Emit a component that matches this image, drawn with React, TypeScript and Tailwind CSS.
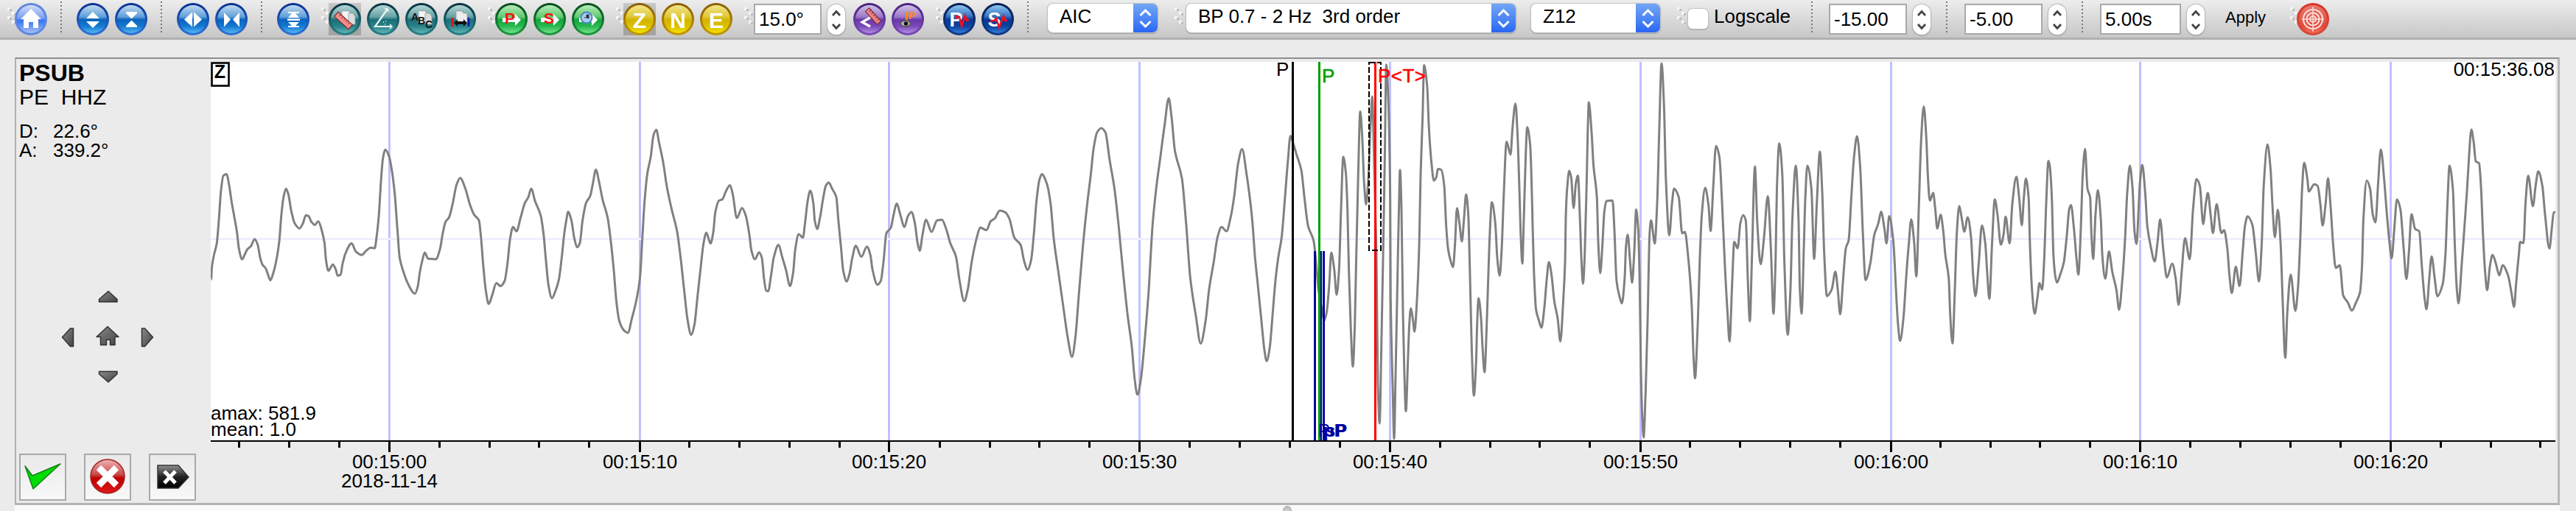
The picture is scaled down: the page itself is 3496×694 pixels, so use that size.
import type { ReactNode } from 'react';
import clsx from 'clsx';

type Tone =
  | 'home'
  | 'blue'
  | 'teal'
  | 'green'
  | 'yellow'
  | 'purple'
  | 'navy'
  | 'red';

const rims: Record<Tone, string> = {
  home: 'bg-linear-to-b from-[#5f86dc] to-[#5c86e8]',
  blue: 'bg-linear-to-b from-[#0a2f90] to-[#2f74d6]',
  teal: 'bg-linear-to-b from-[#06303f] to-[#2a8488]',
  green: 'bg-linear-to-b from-[#06481c] to-[#1c9a40]',
  yellow: 'bg-linear-to-b from-[#8a5a06] to-[#c49a00]',
  purple: 'bg-linear-to-b from-[#47207e] to-[#7c4cb8]',
  navy: 'bg-linear-to-b from-[#071a4c] to-[#123c8c]',
  red: 'bg-linear-to-b from-[#d83428] to-[#d84838]',
};

const fills: Record<Tone, string> = {
  home: 'bg-[linear-gradient(#d3def8,#7da2f2_45%,#3473f3_55%,#a9c0f2)]',
  blue: 'bg-[linear-gradient(#c2d9ef,#5f9fd9_42%,#0a63bd_52%,#1379d2_75%,#58b4f2)]',
  teal: 'bg-[linear-gradient(#b4d4d4,#65a3a5_42%,#1a6f78_52%,#27828a_75%,#62b4b4)]',
  green: 'bg-[linear-gradient(#b6eab8,#62ca70_42%,#12a63e_52%,#28b850_75%,#74e28a)]',
  yellow: 'bg-[linear-gradient(#f0e488,#dfc836_42%,#d2b400_52%,#dcc000_75%,#f2e000)]',
  purple: 'bg-[linear-gradient(#cfc0e4,#9c78c8_42%,#6a38a8_52%,#7a48b8_75%,#b08ce0)]',
  navy: 'bg-[linear-gradient(#8cc4ee,#3a7ac6_38%,#0a3894_52%,#0d429e_75%,#2f7ed6)]',
  red: 'bg-[linear-gradient(#e8786c,#e25a4c_50%,#df4a3a_75%,#ee7058)]',
};

function Ball({
  tone,
  className,
  active,
  children,
}: {
  tone: Tone;
  className?: string;
  active?: boolean;
  children: ReactNode;
}) {
  return (
    <button
      type="button"
      className={clsx(
        'grid size-11 shrink-0',
        active && 'bg-linear-to-b from-[#c9c9c9] via-[#aaaaaa] to-[#a2a2a2]',
        className,
      )}
    >
      <span className={clsx('[grid-area:1/1] grid rounded-full p-[3px]', rims[tone])}>
        <span className={clsx('rounded-full', fills[tone])} />
      </span>
      <svg viewBox="0 0 44 44" className="[grid-area:1/1] size-full" fill="white">
        {children}
      </svg>
    </button>
  );
}

function Grip({ className }: { className?: string }) {
  return (
    <svg viewBox="0 0 12 24" className={clsx('h-6 w-3 shrink-0', className)}>
      {[0, 12].map((y) => (
        <g key={y}>
          <rect x="0" y={y} width="4" height="4" fill="#f6f6f6" />
          <rect x="3" y={y + 2} width="3" height="3" fill="#bdbdbd" />
          <rect x="6" y={y + 6} width="4" height="4" fill="#f6f6f6" />
          <rect x="9" y={y + 8} width="3" height="3" fill="#bdbdbd" />
        </g>
      ))}
    </svg>
  );
}

function Separator({ className }: { className?: string }) {
  return (
    <span
      className={clsx(
        'h-[44px] w-[2px] shrink-0 bg-[repeating-linear-gradient(#777_0_2px,transparent_2px_5px)]',
        className,
      )}
    />
  );
}

function Spin({
  value,
  className,
}: {
  value: string;
  className?: string;
}) {
  return (
    <>
      <span
        className={clsx(
          'mt-px flex h-[42px] shrink-0 items-center border-2 border-[#a9a9a9] bg-white pl-[5px] text-[26px] leading-none',
          className,
        )}
      >
        {value}
      </span>
      <span className="mt-[2px] ml-2 grid h-[41px] w-6 shrink-0 place-items-center rounded-full bg-white shadow-[0_0_1px_1px_#bdbdbd,0_1px_1px_1px_#a5a5a5]">
        <svg viewBox="0 0 24 42" className="h-[42px] w-6" fill="none" stroke="#444" strokeWidth="2.8">
          <path d="M7 15l5-5.500l5 5.500M7 27l5 5.500l5-5.500" />
        </svg>
      </span>
    </>
  );
}

function Combo({ value, className }: { value: string; className?: string }) {
  return (
    <span
      className={clsx(
        'flex h-[39px] shrink-0 overflow-hidden rounded-[7px] bg-white text-[26px] leading-[34px] shadow-[0_0_1px_1px_#c4c4c4,0_1px_1px_1px_#a0a0a0]',
        className,
      )}
    >
      <span className="grow pl-4 whitespace-pre">{value}</span>
      <span className="grid w-[33px] place-items-center bg-linear-to-b from-[#74a6f6] to-[#2a66f2]">
        <svg viewBox="0 0 33 39" className="h-[39px] w-[33px]" fill="none" stroke="white" strokeWidth="3">
          <path d="M9.500 16l7-7l7 7M9.500 24l7 7l7-7" />
        </svg>
      </span>
    </span>
  );
}

function Pages() {
  return (
    <>
      <path d="M18 11h9l3 4v12h-12z" fill="#f4f4f4" stroke="#aaa" strokeWidth=".8" />
      <path d="M27 14h6l3 4v11h-9z" fill="#dcdcdc" stroke="#999" strokeWidth=".8" />
    </>
  );
}

function Toolbar() {
  return (
    <div className="flex h-[54px] items-start border-b-[3px] border-[#b0b0b0] bg-linear-to-b from-[#ededed] to-[#c7c7c7] pt-1 pl-[10px]">
      <Grip className="mt-[6px]" />
      <Ball tone="home" className="-ml-[2px]">
        <path d="M22 8L8 22h4v12h7v-8h6v8h7V22h4z" />
      </Ball>
      <Separator className="-mt-[2px] ml-[18px]" />
      <Ball tone="blue" className="ml-5">
        <path d="M22 12l9 9H13zM22 34l9-9H13z" />
      </Ball>
      <Ball tone="blue" className="ml-2">
        <path d="M15 12h15v2l-7 7h-1l-7-7zM15 33h15v-2l-7-7h-1l-7 7z" />
      </Ball>
      <Separator className="-mt-[2px] ml-[18px]" />
      <Ball tone="blue" className="ml-5">
        <path d="M10 22.500l11-10v20zM34 22.500l-11-10v20z" />
      </Ball>
      <Ball tone="blue" className="ml-2">
        <path d="M12 13l9 9.500l-9 10zM33 13l-9 9.500l9 10z" />
      </Ball>
      <Separator className="-mt-[2px] ml-[18px]" />
      <Ball tone="blue" className="ml-5">
        <path d="M15 12h15v2h-5l5 6H15l5-6h-5zM14 21.500h17v2.500H14zM15 33h15v-2h-5l5-5H15l5 5h-5z" />
      </Ball>
      <Grip className="mt-[6px] ml-4" />

      <Ball tone="teal" active className="-ml-[2px]">
        <Pages />
        <g transform="rotate(42 20 24)">
          <rect x="7" y="20" width="26" height="8" fill="#f28c8c" stroke="#7a2020" />
          <path d="M12 20v3M16 20v3M20 20v3M24 20v3M28 20v3" stroke="#8c2626" />
        </g>
      </Ball>
      <Ball tone="teal" className="ml-2">
        <g fill="none" stroke="#eef8f8" strokeWidth="2.2">
          <path d="M28 8L11 32h22" />
          <path d="M24 8l4 0l1 4M31 29l3 3l-3 3" strokeWidth="1.500" />
          <path d="M22 26h1M25 25h1M24 29h1" strokeWidth="1.500" />
        </g>
      </Ball>
      <Ball tone="teal" className="ml-2">
        <Pages />
        <g fill="#111" className="text-[14px] font-bold">
          <text x="8" y="24">A</text>
          <text x="17" y="29">B</text>
          <text x="27" y="34">C</text>
        </g>
      </Ball>
      <Ball tone="teal" className="ml-2">
        <path d="M17 11h8l2 3h5v13H17z" fill="#ececec" stroke="#999" strokeWidth=".8" />
        <path d="M12 20v12" stroke="#e01010" strokeWidth="2.500" />
        <path d="M34 20v12" stroke="#1010b0" strokeWidth="2.500" />
        <path d="M14 27l5-5v3h8v-3l5 5l-5 5v-3h-8v3z" fill="#111" />
      </Ball>

      <Grip className="mt-[6px] ml-4" />
      <Ball tone="green" className="-ml-[2px]">
        <path d="M10 20h17v-5l8 8l-8 8v-5H10z" />
        <text x="13" y="28" fill="#f81010" className="text-[21px] font-bold">P</text>
      </Ball>
      <Ball tone="green" className="ml-2">
        <path d="M10 20h17v-5l8 8l-8 8v-5H10z" />
        <text x="14" y="28" fill="#f81010" className="text-[21px] font-bold">S</text>
      </Ball>
      <Ball tone="green" className="ml-2">
        <path d="M10 20h17v-5l8 8l-8 8v-5H10z" />
        <circle cx="20" cy="20" r="7.500" fill="#a9cdf0" stroke="#4a86c4" strokeWidth="2" />
        <path d="M20 20h-3M20 20v-4h3v5z" stroke="#333" fill="#333" />
      </Ball>

      <Grip className="mt-[6px] ml-4" />
      <Ball tone="yellow" active className="-ml-[2px]">
        <text x="22" y="33.500" textAnchor="middle" className="text-[30px] font-bold">Z</text>
      </Ball>
      <Ball tone="yellow" className="ml-2">
        <text x="22" y="33.500" textAnchor="middle" className="text-[30px] font-bold">N</text>
      </Ball>
      <Ball tone="yellow" className="ml-2">
        <text x="22" y="33.500" textAnchor="middle" className="text-[30px] font-bold">E</text>
      </Ball>

      <Grip className="mt-[6px] ml-4" />
      <Spin value="15.0°" className="ml-[1px] w-[92px]" />
      <Ball tone="purple" className="ml-[11px]">
        <path d="M23 20L12 26l11 6" fill="none" stroke="white" strokeWidth="3.200" />
        <g transform="rotate(48 27 18)">
          <rect x="15" y="14.500" width="24" height="7" fill="#ee8080" stroke="#702838" />
          <path d="M19 14.500v3M23 14.500v3M27 14.500v3M31 14.500v3M35 14.500v3" stroke="#702838" />
        </g>
      </Ball>
      <Ball tone="purple" className="ml-2">
        <text x="18.500" y="22" fill="#ff8a10" className="text-[15px] font-bold">IP</text>
        <path d="M20.500 12v15" stroke="#ff8a10" strokeWidth="2.500" />
        <ellipse cx="19" cy="28" rx="6.500" ry="4" fill="#b9b9b9" stroke="#555" strokeWidth="1.500" />
        <circle cx="19.500" cy="28" r="2.800" fill="#111" />
      </Ball>

      <Grip className="mt-[6px] ml-4" />
      <Ball tone="navy" className="-ml-[2px]">
        <text x="8.500" y="31.500" className="text-[27px] font-bold">P</text>
        <path d="M17 22l1-4l4 1l3 13l5-15l2 7l3-1" fill="none" stroke="#f01020" strokeWidth="2.500" />
      </Ball>
      <Ball tone="navy" className="ml-2">
        <text x="8.500" y="31.500" className="text-[27px] font-bold">S</text>
        <path d="M12 25l5-1l3-3l4 12l6-15l2 6l3-1" fill="none" stroke="#f01020" strokeWidth="2.500" />
      </Ball>

      <Separator className="-mt-[2px] ml-[18px]" />
      <Combo value="AIC" className="mt-[1px] ml-[26px] w-[149px]" />
      <Grip className="mt-[6px] ml-[23px]" />
      <Combo value="BP 0.7 - 2 Hz  3rd order" className="mt-[1px] ml-[4px] w-[447px]" />
      <Combo value="Z12" className="mt-[1px] ml-[21px] w-[175px]" />
      <Grip className="mt-[6px] ml-[23px]" />
      <span className="mt-2 ml-[3px] size-[27px] shrink-0 rounded-[6px] bg-white shadow-[0_0_1px_1px_#c4c4c4,0_1px_1px_1px_#a8a8a8]" />
      <span className="ml-[8px] w-[105px] text-[26px] leading-[37px]">Logscale</span>
      <Separator className="-mt-[2px] ml-[27px]" />
      <Spin value="-15.00" className="ml-[22px] w-[106px]" />
      <Separator className="-mt-[2px] ml-[21px]" />
      <Spin value="-5.00" className="ml-[23px] w-[106px]" />
      <Separator className="-mt-[2px] ml-[21px]" />
      <Spin value="5.00s" className="ml-[23px] w-[110px]" />
      <span className="ml-[28px] w-[56px] text-[22px] leading-[40px]">Apply</span>
      <Grip className="mt-[6px] ml-[32px]" />
      <Ball tone="red" className="-ml-[3px]">
        <g fill="none" stroke="#fbdcd8" strokeWidth="2.200">
          <circle cx="22" cy="22" r="13" />
          <circle cx="22" cy="22" r="8.500" />
          <circle cx="22" cy="22" r="4" />
          <path d="M22 5v34M7 22h30" strokeWidth="1.500" />
        </g>
      </Ball>
    </div>
  );
}

// Digitised trace. Every record has its own start pixel and horizontal
// resolution, the vertical resolution is shared.
const Y_RES = 2.554;

const records = [
  {
    start: 280,
    res: 2.119,
    samples:
      '14,765 16,722 22,680 30,640 36,560 42,460 49,405 58,400 66,440 72,490 80,545 88,600 94,660 103,695 110,680 118,660 128,650 139,625 148,645 155,690 162,715 170,725 178,750 184,768 192,745 202,695 210,630 216,540 222,480 229,450 236,470 244,525 254,570 268,588 278,570 286,543 294,545 302,565 312,576 322,563 332,595 340,640 344,695 351,735 364,713 372,730 378,752 386,748 392,710 400,675 418,640 430,668 447,680 460,665 472,655 484,657 490,615 496,545 502,430 508,345 515,315 526,340 534,390 542,470 550,600 556,690 566,735 578,775 600,814 608,790 614,740 622,695 628,672 638,693 660,695 672,660 680,605 688,565 698,550 708,505 720,435 730,413 745,450 758,505 770,540 784,560 790,620 796,710 804,805 812,850 822,820 834,778 846,788 858,770 866,710 874,620 882,583 892,598 904,550 916,500 926,480 934,450 946,495 962,545 970,610 976,690 984,785 994,830 1004,805 1014,765 1022,690 1030,600 1036,555 1040,530 1050,560 1058,620 1066,653 1074,640 1082,560 1092,500 1104,475 1112,430 1120,384 1130,430 1140,490 1154,550 1164,640 1172,735 1180,850 1188,910 1200,940 1212,950 1224,900 1238,830 1247,760 1254,620 1260,500 1268,400 1278,340 1286,265 1294,246 1302,290 1314,360 1324,440 1338,520 1354,600 1364,690 1374,800 1384,905 1394,957 1404,920 1412,830 1422,720 1430,640 1438,603 1450,640 1458,600 1464,530 1474,492 1484,487 1494,460 1506,438 1514,470',
  },
  {
    start: 1000,
    res: 2.119,
    samples:
      '0,552 15,517 26,545 36,610 42,665 52,695 64,671 72,690 78,760 84,803 90,806 98,755 106,690 120,645 130,685 142,735 153,788 162,740 168,660 178,608 190,620 196,570 204,490 211,457 220,500 224,560 231,590 240,545 248,485 256,440 264,429 274,450 286,480 292,560 300,660 306,735 316,772 324,745 332,690 342,648 358,686 374,651 384,680 390,730 404,783 414,770 422,700 430,605 443,585 450,545 460,502 470,540 482,583 492,545 502,531 512,570 520,640 526,665 534,610 544,558 560,600 576,560 590,558 602,590 614,640 630,685 640,765 654,840 664,800 676,700 690,620 700,585 718,594 730,563 742,553 756,526 772,532 784,555 798,620 816,645 826,700 836,732 846,700 854,610 862,490 870,420 877,400 892,435 902,500 912,630 926,750 940,870 952,970 964,1033 974,960 984,810 996,640 1006,520 1018,400 1026,310 1036,255 1048,240 1060,255 1072,350 1086,450 1098,580 1110,730 1124,890 1136,1000 1144,1110 1152,1165 1162,1110 1172,990 1184,810 1196,570 1206,450 1218,340 1230,230 1242,137 1250,200 1260,320 1280,415 1292,570 1304,760 1320,890 1334,987 1348,910 1358,800 1372,700 1382,620 1394,583 1408,598 1420,550 1430,480 1442,360 1453,313 1466,400 1478,510',
  },
  {
    start: 1700,
    res: 3,
    samples:
      '0,575 10,690 22,790 36,910 48,1010 57,1048 70,1000 80,900 94,760 104,690 118,620 130,500 144,350 154,267 166,295 180,335 198,385 212,490 226,580 248,630 258,700 268,800 282,870 292,908 302,875 312,780 320,672 332,730 342,818 352,730 360,520 369,340 380,400 386,520 392,740 400,940 408,1067 416,920 422,680 430,400 438,182 446,270 454,430 462,505 472,400 480,230 487,130 495,370 504,680 510,1130 517,1265 524,1000 532,650 538,350 544,20 552,130 560,480 562,830 570,1130 576,1318 582,1100 590,750 596,500 600,385 606,520 612,880 618,1100 624,1222 632,1050 638,920 644,865 652,900 659,946 668,850 678,650 684,400 692,200 698,22 710,90 718,240 728,360 738,422 748,410 754,382 768,385 780,440 788,580 796,660 806,700 816,722 824,640 832,518 842,570 852,633 860,560 869,470 878,540 884,720 892,1000 901,1168 910,1050 914,920 920,830 930,900 936,1000 944,1087 954,900 964,640 974,497 988,570 996,690 1006,752 1014,660 1022,480 1034,287 1050,332 1058,240 1070,155 1078,250 1086,450 1092,620 1098,710 1104,560 1112,330 1118,237 1130,300 1138,500',
  },
  {
    start: 2080,
    res: 2.178,
    samples:
      '0,580 4,740 10,870 18,905 26,932 34,870 42,760 48,705 56,750 64,840 74,900 82,980 90,850 96,700 98,550 102,450 108,388 114,410 121,517 128,430 134,405 140,560 144,690 149,780 154,680 160,410 163,250 166,150 174,250 180,370 190,480 194,640 200,743 206,650 212,530 218,493 236,491 242,600 248,770 256,820 264,848 272,760 276,650 281,610 288,700 294,776 300,680 306,522 312,590 316,750 320,1070 324,1240 328,1313 334,1150 340,900 346,600 350,560 361,640 368,500 374,260 381,15 388,150 394,420 404,612 412,500 418,450 432,480 442,605 450,600 460,690 470,850 476,1040 480,1108 488,920 494,700 500,540 510,447 520,510 526,597 534,440 542,302 552,340 560,500 568,710 576,880 582,980 590,770 596,635 606,657 614,570 622,542 630,560 636,760 642,910 648,700 657,373 664,570 674,712 684,620 695,476 704,650 712,884 718,700 722,450 729,293 738,400 744,700 754,957 762,800 768,550 778,370 786,560 790,800 795,884 802,640 806,480 812,370 824,450 832,694 840,500 849,322 856,460 862,680 870,823 884,800 895,738 902,800 909,886 918,760 926,655 934,630 942,480 950,340 959,268 968,370 976,600 984,767 998,710 1010,610 1022,570 1030,530 1040,590 1046,640 1054,545 1066,630 1074,800 1080,920 1086,978 1096,900 1104,760 1112,640 1119,557 1128,640 1134,755 1142,500 1148,290 1156,165 1164,280 1168,400 1174,492 1184,465 1190,520 1196,588 1206,540 1214,600 1220,680 1230,760 1234,880 1241,987 1248,800 1254,600 1261,510 1268,550 1276,599 1286,550 1296,620 1302,750 1309,823 1318,720 1328,578 1338,640 1344,750 1350,832 1358,640 1366,487 1374,540 1384,644 1392,610 1398,547 1410,640 1418,500 1430,409 1438,480 1446,577 1452,480 1458,415 1466,480 1470,640 1476,800 1484,884 1492,830 1498,778 1506,800 1512,700 1518,500',
  },
  {
    start: 2780,
    res: 2.19,
    samples:
      '0,354 4,370 10,480 15,680 20,750 25,776 36,745 46,705 54,620 62,520 67,507 76,590 84,700 89,748 96,600 102,400 109,312 116,450 124,480 128,610 133,694 140,540 147,455 156,560 160,680 169,762 180,668 190,740 202,800 210,870 220,760 228,620 234,470 242,370 250,450 256,600 262,642 268,520 272,430 279,368 288,470 294,580 304,650 316,702 324,640 332,557 342,670 352,758 368,710 378,760 387,853 396,740 406,622 420,695 430,520 440,417 450,440 460,573 468,500 474,465 482,540 489,604 500,504 514,604 522,594 532,660 538,750 545,812 557,721 568,788 578,660 584,580 592,546 606,575 616,670 626,772 634,640 640,440 651,297 660,380 666,510 673,618 682,523 690,640 696,830 704,1037 710,880 720,748 734,874 742,790 748,640 754,450 760,360 770,420 774,460 790,435 800,440 808,500 815,578 824,500 831,414 838,500 846,640 854,725 866,716 876,820 890,845 902,873 914,845 926,810 932,720 936,560 946,422 956,450 964,540 972,567 980,430 988,314 998,420 1006,540 1014,640 1020,692 1028,590 1036,487 1046,520 1056,660 1064,764 1072,660 1079,539 1090,590 1102,598 1110,720 1118,830 1124,868 1132,760 1139,685 1148,760 1156,823 1172,780 1180,680 1186,500 1192,370 1202,450 1208,650 1214,800 1219,848 1228,720 1236,590 1244,460 1250,340 1257,245 1264,290 1270,355 1280,362 1286,450 1292,620 1298,740 1304,802 1312,720 1320,680 1330,710 1340,751 1350,716 1366,750 1376,810 1384,860 1390,780 1398,680 1402,635 1412,639 1418,500 1426,405 1440,511 1448,440 1456,390 1468,440 1476,540 1489,658 1496,590 1502,532 1507,531',
  },
];

const points = records.flatMap(({ start, res, samples }) =>
  samples.split(' ').map((sample) => {
    const [x, y] = sample.split(',').map(Number);
    return { x: start + x / res, y: 80 + y / Y_RES };
  }),
);

// Monotone cubic through the samples, flat at every peak and trough.
function smoothPath(pts: { x: number; y: number }[]) {
  const slope = (i: number) =>
    (pts[i + 1].y - pts[i].y) / (pts[i + 1].x - pts[i].x);

  const tangents = pts.map((_, i) => {
    if (i === 0 || i === pts.length - 1) {
      return 0;
    }
    const before = slope(i - 1);
    const after = slope(i);
    return before * after <= 0 ? 0 : (2 * before * after) / (before + after);
  });

  let d = `M${pts[0].x.toFixed(1)} ${pts[0].y.toFixed(1)}`;
  for (let i = 1; i < pts.length; i++) {
    const a = pts[i - 1];
    const b = pts[i];
    const h = (b.x - a.x) / 3;
    const coords = [
      a.x + h,
      a.y + h * tangents[i - 1],
      b.x - h,
      b.y - h * tangents[i],
      b.x,
      b.y,
    ];
    d += `C${coords.map((n) => n.toFixed(1)).join(' ')}`;
  }
  return d;
}

const trace = smoothPath(points);

const majors = [
  { x: 528.5, label: '00:15:00' },
  { x: 868.5, label: '00:15:10' },
  { x: 1206.5, label: '00:15:20' },
  { x: 1546.5, label: '00:15:30' },
  { x: 1886.5, label: '00:15:40' },
  { x: 2226.5, label: '00:15:50' },
  { x: 2566.5, label: '00:16:00' },
  { x: 2904.5, label: '00:16:10' },
  { x: 3244.5, label: '00:16:20' },
];

// two seconds between minor ticks
const minors = Array.from({ length: 47 }, (_, i) => 324.5 + i * 67.9).filter(
  (x) => x < 3468 && majors.every((major) => Math.abs(major.x - x) > 10),
);

function Seismogram() {
  return (
    <svg
      viewBox="286 80 3185 603"
      className="h-[603px] w-[3185px] shrink-0 text-[26px]"
    >
      <rect x="286" y="84" width="3182" height="514" fill="white" />
      <g shapeRendering="crispEdges">
        {majors.map(({ x }) => (
          <path key={x} d={`M${x} 84V598`} stroke="#c0c0ff" strokeWidth="3" />
        ))}
        <path d="M286 324.500H3468" stroke="#efefff" strokeWidth="3" />
      </g>

      <clipPath id="plot">
        <rect x="286" y="84" width="3182" height="514" />
      </clipPath>
      <path
        d={trace}
        clipPath="url(#plot)"
        fill="none"
        stroke="#808080"
        strokeWidth="3"
        strokeLinejoin="round"
      />

      <g shapeRendering="crispEdges" strokeWidth="3">
        <path d="M1784.500 341V598M1792.500 341V598M1796.500 341V598" stroke="#0000a0" />
        <path d="M1754.500 84V598" stroke="black" />
        <path d="M1790.500 84V598" stroke="#00a000" />
        <path d="M1866.500 84V598" stroke="red" />
        <path
          d="M1858 85H1874V340H1858Z"
          fill="none"
          stroke="black"
          strokeWidth="2"
          strokeDasharray="8 3"
        />
      </g>
      <text x="1732" y="103">P</text>
      <text x="1794" y="112" fill="#00a000" stroke="#00a000" strokeWidth=".6">P</text>
      <text x="1870" y="112" fill="red" stroke="red" strokeWidth=".6" textLength="65">
        P&lt;T&gt;
      </text>
      <g fill="#0000a0" className="text-[24px] font-bold">
        <text x="1789" y="593" className="font-normal">P</text>
        <text x="1796" y="593">pP</text>
        <text x="1799" y="593">sP</text>
      </g>

      <rect x="287.500" y="85.500" width="23" height="31" fill="white" stroke="black" strokeWidth="2.600" />
      <text x="298.500" y="106" textAnchor="middle" className="text-[25px] font-bold">Z</text>
      <text x="3467" y="103" textAnchor="end">00:15:36.08</text>
      <text x="286" y="570" textLength="143">amax: 581.9</text>
      <text x="286" y="592" textLength="116">mean: 1.0</text>

      <g shapeRendering="crispEdges" stroke="black">
        <path d="M286 599H3468" strokeWidth="2" />
        {minors.map((x) => (
          <path key={x} d={`M${Math.floor(x) + 0.5} 598V608`} strokeWidth="3" />
        ))}
        {majors.map(({ x }) => (
          <path key={x} d={`M${x} 598V614`} strokeWidth="3" />
        ))}
      </g>
      <g textAnchor="middle">
        {majors.map(({ x, label }) => (
          <text key={label} x={x} y="636">{label}</text>
        ))}
        <text x="528.500" y="662">2018-11-14</text>
      </g>
    </svg>
  );
}

function ActionButton({ children }: { children: ReactNode }) {
  return (
    <button
      type="button"
      className="size-16 border-2 border-[#a9a9a9] bg-linear-to-b from-[#e9e9e9] to-[#f8f8f8]"
    >
      <svg viewBox="0 0 60 60" className="size-full">
        {children}
      </svg>
    </button>
  );
}

function StationPanel() {
  return (
    <div className="flex w-[264px] shrink-0 flex-col pl-1">
      <div className="pt-[2px] text-[32px] leading-[34px] font-bold">PSUB</div>
      <div className="text-[30px] leading-[31px] whitespace-pre">PE  HHZ</div>
      <div className="mt-[18px] grid grid-cols-[46px_auto] text-[26px] leading-[26px]">
        <span>D:</span>
        <span>22.6°</span>
        <span>A:</span>
        <span>339.2°</span>
      </div>

      <svg
        viewBox="80 390 132 136"
        className="mt-[172px] ml-[54px] h-[136px] w-[132px]"
        stroke="#333"
        strokeLinejoin="round"
        strokeWidth="1.500"
      >
        <defs>
          <linearGradient id="arrow" x1="0" y1="0" x2="1" y2="1">
            <stop offset="0" stopColor="#8a8a8a" />
            <stop offset="1" stopColor="#444" />
          </linearGradient>
        </defs>
        <g fill="url(#arrow)">
          <path d="M147 396.500l12 11v3.500h-24.500v-3.500z" />
          <path d="M147 520l12-11v-3.500h-24.500v3.500z" />
          <path d="M84.500 459l11-12h4v24.500h-4z" />
          <path d="M207.500 459l-11-12h-4v24.500h4z" />
          <path d="M146 444.500l15 14h-5v11h-6.500v-7h-5v7h-8v-11h-5.500z" />
        </g>
      </svg>

      <div className="mt-auto mb-[3px] flex gap-6">
        <ActionButton>
          <path
            d="M6 15l10 13L54 12L17 46Z"
            fill="#00dd00"
            stroke="#168016"
            strokeWidth="1.500"
            strokeLinejoin="round"
          />
        </ActionButton>
        <ActionButton>
          <defs>
            <linearGradient id="stop" x1="0" y1="0" x2="0" y2="1">
              <stop offset="0" stopColor="#efb4b4" />
              <stop offset=".45" stopColor="#c84848" />
              <stop offset=".55" stopColor="#c00000" />
              <stop offset="1" stopColor="#e01818" />
            </linearGradient>
          </defs>
          <circle cx="30" cy="29" r="23" fill="url(#stop)" stroke="#a02020" strokeWidth="1.500" />
          <path d="M18 17l24 24M42 17L18 41" stroke="white" strokeWidth="9" />
        </ActionButton>
        <ActionButton>
          <defs>
            <linearGradient id="tag" x1="0" y1="0" x2="0" y2="1">
              <stop offset="0" stopColor="#909090" />
              <stop offset=".5" stopColor="#222" />
              <stop offset="1" stopColor="#000" />
            </linearGradient>
          </defs>
          <path d="M10 14h28l14 16l-14 15H10z" fill="url(#tag)" stroke="#333" strokeWidth="1.500" />
          <path d="M19 22l15 16M34 22L19 38" stroke="white" strokeWidth="5" />
        </ActionButton>
      </div>
    </div>
  );
}

export default function App() {
  return (
    <div className="flex h-[694px] w-[3496px] flex-col overflow-hidden bg-[#ebebeb] font-['Liberation_Sans',Arial,sans-serif] text-black">
      <Toolbar />
      <div className="mt-6 ml-5 flex h-[608px] w-[3454px] border-t-2 border-r-3 border-b-3 border-l-2 border-t-[#8e8e8e] border-r-[#b8b8b8] border-b-[#b4b4b4] border-l-[#b0b0b0]">
        <StationPanel />
        <Seismogram />
      </div>
      <div className="ml-5 h-2 w-[3454px] overflow-hidden bg-[#fafafa] pt-px pl-[1721px]">
        <div className="size-3 rounded-full border border-[#aaa] bg-linear-to-b from-[#bbb] to-[#ddd]" />
      </div>
    </div>
  );
}
